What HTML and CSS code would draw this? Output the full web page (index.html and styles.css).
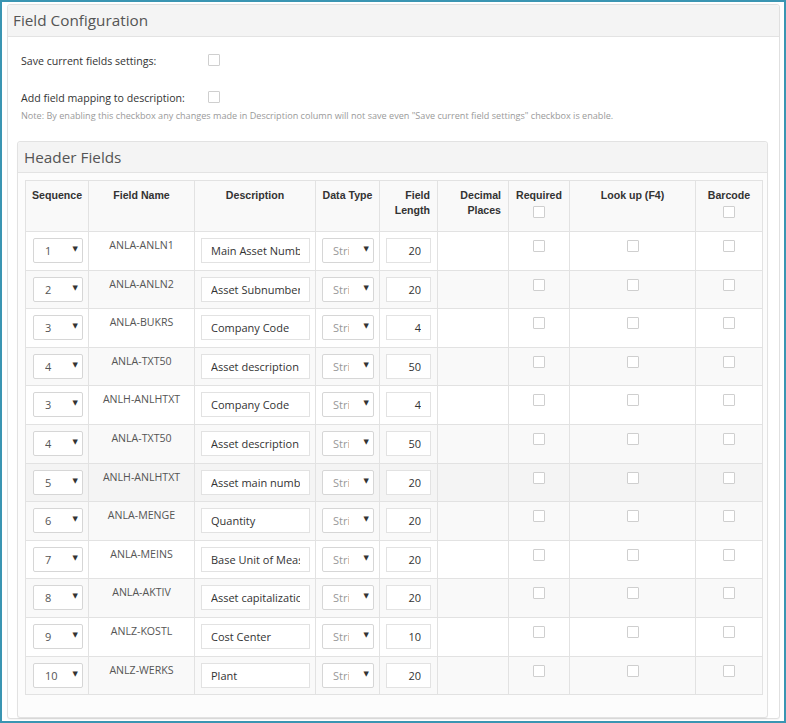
FILE: index.html
```html
<!DOCTYPE html>
<html lang="en">
<head>
    <meta charset="UTF-8">
    <meta name="viewport" content="width=device-width, initial-scale=1.0">
    <title>Field Configuration</title>
    <link rel="stylesheet" href="styles.css">
</head>
<body>
    <div class="panel">
        <div class="panel-heading">Field Configuration</div>
        <div class="panel-body">
            <!-- General settings -->
            <div class="form-row first">
                <label class="form-label">Save current fields settings:</label>
                <input type="checkbox" class="check">
            </div>
            <div class="form-row">
                <label class="form-label">Add field mapping to description:</label>
                <input type="checkbox" class="check">
            </div>
            <p class="note">Note: By enabling this checkbox any changes made in Description column will not save even "Save current field settings" checkbox is enable.</p>

            <!-- Header fields -->
            <div class="panel inner">
                <div class="panel-heading">Header Fields</div>
                <div class="panel-body">
                    <table class="fields-table">
                        <colgroup>
                            <col style="width:63px">
                            <col style="width:106px">
                            <col style="width:121px">
                            <col style="width:64px">
                            <col style="width:58px">
                            <col style="width:71px">
                            <col style="width:61px">
                            <col style="width:126px">
                            <col style="width:67px">
                        </colgroup>
                        <tbody id="rows">
                            <tr class="head">
                                <th>Sequence</th>
                                <th>Field Name</th>
                                <th>Description</th>
                                <th>Data Type</th>
                                <th class="right">Field<br>Length</th>
                                <th class="right">Decimal<br>Places</th>
                                <th>Required<br><input type="checkbox" class="check"></th>
                                <th>Look up (F4)</th>
                                <th>Barcode<br><input type="checkbox" class="check"></th>
                            </tr>
                        </tbody>
                    </table>
                </div>
            </div>
        </div>
    </div>

    <script>
        // Rows of the header fields table
        const fields = [
            [1, 'ANLA-ANLN1', 'Main Asset Number', 20],
            [2, 'ANLA-ANLN2', 'Asset Subnumber', 20],
            [3, 'ANLA-BUKRS', 'Company Code', 4],
            [4, 'ANLA-TXT50', 'Asset description', 50],
            [3, 'ANLH-ANLHTXT', 'Company Code', 4],
            [4, 'ANLA-TXT50', 'Asset description', 50],
            [5, 'ANLH-ANLHTXT', 'Asset main number text', 20],
            [6, 'ANLA-MENGE', 'Quantity', 20],
            [7, 'ANLA-MEINS', 'Base Unit of Measure', 20],
            [8, 'ANLA-AKTIV', 'Asset capitalization date', 20],
            [9, 'ANLZ-KOSTL', 'Cost Center', 10],
            [10, 'ANLZ-WERKS', 'Plant', 20]
        ];

        const tbody = document.getElementById('rows');
        fields.forEach(function (f, i) {
            const tr = document.createElement('tr');
            if (i === 6) tr.className = 'hover';
            tr.innerHTML =
                '<td><div class="select-wrap seq"><select><option>' + f[0] + '</option></select></div></td>' +
                '<td class="center name">' + f[1] + '</td>' +
                '<td><input type="text" class="text desc" value="' + f[2] + '"></td>' +
                '<td><div class="select-wrap type"><select><option>String</option></select></div></td>' +
                '<td><input type="text" class="text len" value="' + f[3] + '"></td>' +
                '<td></td>' +
                '<td class="center"><input type="checkbox" class="check"></td>' +
                '<td class="center"><input type="checkbox" class="check"></td>' +
                '<td class="center"><input type="checkbox" class="check"></td>';
            tbody.appendChild(tr);
        });
    </script>
</body>
</html>
```

FILE: styles.css
```css
html {
    height: 100%;
}

body {
    margin: 0;
    height: 100%;
    box-sizing: border-box;
    border: 2px solid #3a95b2;
    background-color: #fff;
    font-family: "Open Sans", "Liberation Sans", sans-serif;
    font-size: 10.6px;
    color: #333;
    padding: 2px 4px 0 5px;
    overflow: hidden;
}

.panel {
    border: 1px solid #e0e0e0;
    border-radius: 3px;
    background-color: #fff;
    box-shadow: 0 1px 1px rgba(0, 0, 0, 0.04);
}

.panel-heading {
    background-color: #f4f4f4;
    border-bottom: 1px solid #e3e3e3;
    border-radius: 3px 3px 0 0;
    height: 31px;
    line-height: 31px;
    padding-left: 5px;
    font-size: 15.3px;
    color: #555;
}

.panel-body {
    padding: 10px 11px 0 9px;
}

.form-row {
    display: flex;
    align-items: center;
    height: 22px;
    margin-top: 15px;
    padding-left: 4px;
}

.form-row.first {
    margin-top: 3px;
}

.form-label {
    width: 187px;
    font-size: 10.6px;
    color: #333;
}

.check {
    appearance: none;
    -webkit-appearance: none;
    width: 12px;
    height: 12px;
    margin: 0;
    border: 1px solid #cfcfcf;
    border-radius: 1px;
    background-color: #fff;
    box-sizing: border-box;
    vertical-align: top;
}

.form-row .check {
    margin-top: -3px;
}

.note {
    margin: 1px 0 0 4px;
    font-size: 9.1px;
    color: #9a9a9a;
    line-height: 12px;
}

.panel.inner {
    margin-top: 19px;
    border-color: #e2e2e2;
    background-color: #fcfcfc;
}

.panel.inner .panel-heading {
    padding-left: 6px;
    height: 30px;
    line-height: 30px;
}

.panel.inner .panel-body {
    padding: 7px 6px 22px 7px;
}

.fields-table {
    border-collapse: collapse;
    table-layout: fixed;
    width: 737px;
    background-color: #fff;
}

.fields-table th,
.fields-table td {
    border: 1px solid #e2e2e2;
    vertical-align: top;
}

.fields-table th {
    font-family: "Liberation Sans", Arial, sans-serif;
    font-weight: bold;
    font-size: 10.6px;
    line-height: 15px;
    color: #333;
    text-align: center;
    padding: 7px 6px 13px;
}

.fields-table th.right {
    text-align: right;
    padding-right: 7px;
}

.fields-table th .check {
    margin-top: 3px;
}

.fields-table tr.head,
.fields-table tr:nth-child(odd) {
    background-color: #f9f9f9;
}

.fields-table tr.hover {
    background-color: #f4f4f4;
}

.fields-table td {
    padding: 6px 6px 6.6px;
    height: 25px;
}

.fields-table td.center {
    text-align: center;
}

.fields-table td.name {
    padding-top: 5px;
    line-height: 16px;
    color: #555;
}

.fields-table td .check {
    margin-top: 2px;
}

.select-wrap {
    position: relative;
    height: 25px;
}

.select-wrap::after {
    content: '\25BC';
    position: absolute;
    top: 7px;
    right: 5px;
    font-family: "DejaVu Sans", sans-serif;
    font-size: 7px;
    color: #333;
    pointer-events: none;
}

.select-wrap select {
    appearance: none;
    -webkit-appearance: none;
    width: 100%;
    height: 25px;
    margin: 0;
    border: 1px solid #d6d6d6;
    border-radius: 2px;
    background-color: #fff;
    font-family: "Open Sans", sans-serif;
    font-size: 11px;
    box-sizing: border-box;
}

.select-wrap.seq {
    width: 50px;
    margin-left: 1px;
}

.select-wrap.seq select {
    padding: 0 20px 0 11px;
    color: #555;
}

.select-wrap.type {
    width: 52px;
}

.select-wrap.type select {
    padding: 0 24px 0 10px;
    color: #999;
}

.text {
    height: 25px;
    margin: 0;
    border: 1px solid #e2e2e2;
    background-color: #fff;
    font-family: "Open Sans", sans-serif;
    font-size: 11px;
    color: #333;
    box-sizing: border-box;
}

.text.desc {
    width: 109px;
    padding: 0 9px;
}

.text.len {
    width: 45px;
    padding: 0 9px;
    text-align: right;
}
```
